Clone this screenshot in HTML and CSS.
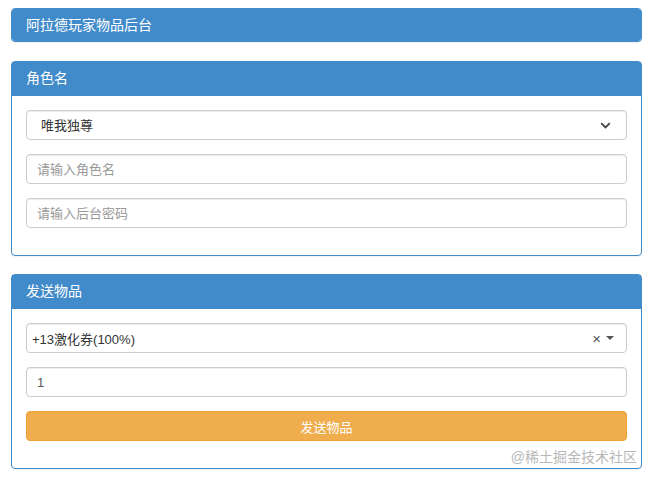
FILE: index.html
```html
<!DOCTYPE html>
<html lang="zh-CN">
<head>
  <meta charset="UTF-8">
  <meta name="viewport" content="width=device-width, initial-scale=1.0">
  <title>阿拉德玩家物品后台</title>
  <link rel="stylesheet" href="styles.css">
</head>
<body>
  <div class="container">
    <!-- Title -->
    <div class="panel panel-top">
      <div class="panel-heading">阿拉德玩家物品后台</div>
    </div>

    <!-- Role -->
    <div class="panel">
      <div class="panel-heading">角色名</div>
      <div class="panel-body">
        <div class="form-group select-wrap">
          <select class="form-control native-select">
            <option>唯我独尊</option>
          </select>
          <svg class="chevron" width="11" height="7" viewBox="0 0 11 7">
            <path d="M1.2 1.2 L5.5 5.5 L9.8 1.2" fill="none" stroke="#444" stroke-width="1.8"/>
          </svg>
        </div>
        <div class="form-group">
          <input type="text" class="form-control" placeholder="请输入角色名">
        </div>
        <div class="form-group">
          <input type="password" class="form-control" placeholder="请输入后台密码">
        </div>
      </div>
    </div>

    <!-- Send item -->
    <div class="panel">
      <div class="panel-heading">发送物品</div>
      <div class="panel-body">
        <div class="form-group">
          <div class="form-control select2">
            <span class="select2-text">+13激化券(100%)</span>
            <span class="select2-clear">×</span>
            <span class="select2-arrow"></span>
          </div>
        </div>
        <div class="form-group">
          <input type="text" class="form-control" value="1">
        </div>
        <div class="form-group">
          <button class="btn-warning">发送物品</button>
        </div>
      </div>
    </div>
  </div>

  <div class="watermark">@稀土掘金技术社区</div>
</body>
</html>
```

FILE: styles.css
```css
body {
  margin: 0;
  font-family: "Liberation Sans", "Noto Sans CJK SC", sans-serif;
  font-size: 13px;
  color: #333;
  background: #fff;
}

.container {
  padding: 8px 9px 0 11px;
}

/* Panels */
.panel {
  border: 1px solid #428bca;
  border-radius: 4px;
  margin-bottom: 18px;
  background: #fff;
  box-shadow: 0 1px 1px rgba(0, 0, 0, 0.05);
}

.panel-heading {
  background-color: #428bca;
  color: #fff;
  font-size: 14px;
  height: 34px;
  line-height: 33px;
  padding: 0 14px;
}

.panel-top {
  margin-bottom: 19px;
}

.panel-top .panel-heading {
  height: 32px;
  line-height: 32px;
  border-radius: 3px;
}

.panel-body {
  padding: 14px 14px 13px;
}

/* Form controls */
.form-group {
  margin-bottom: 14px;
}

.form-control {
  display: block;
  box-sizing: border-box;
  width: 100%;
  height: 30px;
  padding: 0 10px;
  font-family: inherit;
  font-size: 13px;
  color: #555;
  background: #fff;
  border: 1px solid #ccc;
  border-radius: 4px;
  box-shadow: inset 0 1px 1px rgba(0, 0, 0, 0.075);
  outline: none;
}

.form-control::placeholder {
  color: #999;
}

.select-wrap {
  position: relative;
}

.native-select {
  appearance: none;
  -webkit-appearance: none;
  padding-left: 14px;
  color: #333;
}

.chevron {
  position: absolute;
  right: 16px;
  top: 12px;
  pointer-events: none;
}

/* Select2-like box */
.select2 {
  display: flex;
  align-items: center;
  padding: 0 12px 0 5px;
  color: #333;
}

.select2-text {
  flex: 1;
}

.select2-clear {
  font-size: 15px;
  color: #555;
  margin-right: 5px;
}

.select2-arrow {
  width: 0;
  height: 0;
  border-left: 4px solid transparent;
  border-right: 4px solid transparent;
  border-top: 4px solid #555;
}

.btn-warning {
  display: block;
  box-sizing: border-box;
  width: 100%;
  height: 30px;
  font-family: inherit;
  font-size: 13px;
  color: #fff;
  background-color: #f0ad4e;
  border: 1px solid #eea236;
  border-radius: 4px;
  cursor: pointer;
}

.watermark {
  position: absolute;
  right: 14px;
  top: 446px;
  font-size: 14px;
  color: #b8b8b8;
}
```
